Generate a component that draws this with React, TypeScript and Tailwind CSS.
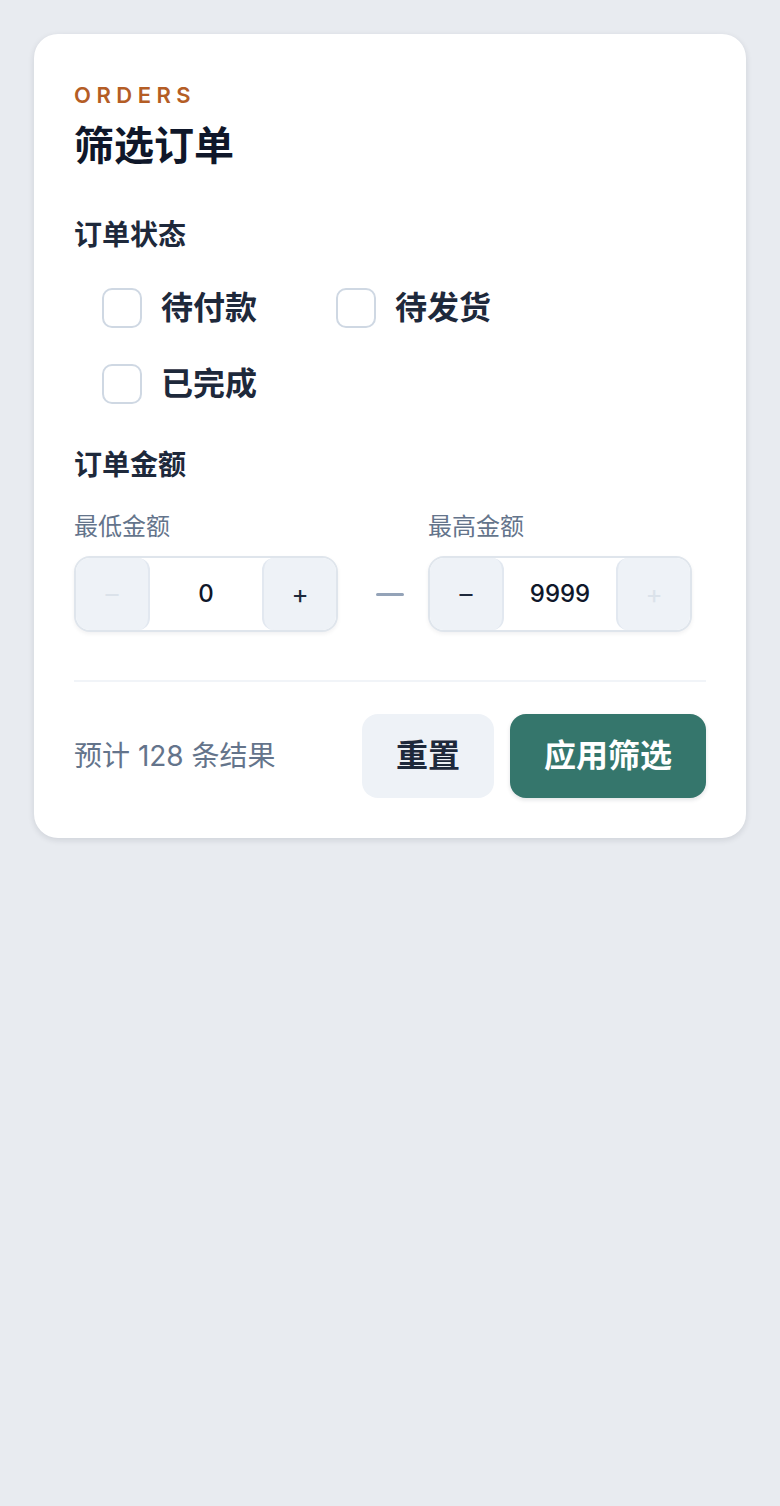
import React from 'react';

const FONT = { fontFamily: 'Inter, "Noto Sans CJK SC", "Noto Sans", sans-serif' };

interface StepperProps {
  value: string;
  minDisabled?: boolean;
  maxDisabled?: boolean;
}

function Stepper({ value, minDisabled = false, maxDisabled = false }: StepperProps) {
  return (
    <div className="flex h-[76px] w-[264px] overflow-hidden rounded-[16px] border-2 border-[#dfe5ec] bg-white shadow-[0_2px_4px_rgba(15,23,42,0.06)]">
      <button
        className={`flex w-[74px] items-center justify-center rounded-[12px] border-r-2 border-[#e2e8f0] bg-[#eef2f7] text-[26px] leading-none ${
          minDisabled ? 'text-[#dbe2ea]' : 'text-[#1e293b]'
        }`}
      >
        –
      </button>
      <div className="flex flex-1 items-center justify-center text-[24px] font-medium text-[#0f172a]">
        {value}
      </div>
      <button
        className={`flex w-[74px] items-center justify-center rounded-[12px] border-l-2 border-[#e2e8f0] bg-[#eef2f7] text-[26px] leading-none ${
          maxDisabled ? 'text-[#dbe2ea]' : 'text-[#1e293b]'
        }`}
      >
        +
      </button>
    </div>
  );
}

function Check({ label }: { label: string }) {
  return (
    <label className="flex items-center gap-[19px]">
      <span className="h-[40px] w-[40px] shrink-0 rounded-[10px] border-2 border-[#cfd8e3] bg-white" />
      <span className="text-[32px] font-bold leading-[40px] text-[#1e293b]">{label}</span>
    </label>
  );
}

export default function App() {
  return (
    <div className="min-h-[1506px] bg-[#e8ebf0] px-[34px] pt-[34px]" style={FONT}>
      <div className="rounded-[24px] bg-white px-[40px] pb-[40px] pt-[47px] shadow-[0_2px_6px_rgba(15,23,42,0.12)]">
        {/* Header */}
        <div className="text-[22px] font-semibold uppercase leading-[28px] tracking-[0.25em] text-[#b45d25]">
          Orders
        </div>
        <h1 className="mt-[13px] text-[40px] font-bold leading-[48px] text-[#0f172a]">筛选订单</h1>

        {/* Status */}
        <h2 className="mt-[47px] text-[28px] font-semibold leading-[36px] text-[#1e293b]">订单状态</h2>
        <div className="mt-[35px] grid grid-cols-[234px_234px] gap-y-[36px] pl-[28px]">
          <Check label="待付款" />
          <Check label="待发货" />
          <Check label="已完成" />
        </div>

        {/* Amount */}
        <h2 className="mt-[43px] text-[28px] font-semibold leading-[36px] text-[#1e293b]">订单金额</h2>
        <div className="mt-[28px] flex items-end">
          <div className="flex flex-col gap-[13px]">
            <span className="text-[24px] leading-[32px] text-[#64748b]">最低金额</span>
            <Stepper value="0" minDisabled />
          </div>
          <div className="ml-[38px] mr-[24px] flex h-[76px] items-center">
            <span className="h-[3px] w-[28px] rounded-full bg-[#94a3b8]" />
          </div>
          <div className="flex flex-col gap-[13px]">
            <span className="text-[24px] leading-[32px] text-[#64748b]">最高金额</span>
            <Stepper value="9999" maxDisabled />
          </div>
        </div>

        <div className="mt-[48px] h-[2px] bg-[#f1f4f8]" />

        {/* Footer */}
        <div className="mt-[32px] flex items-center justify-between">
          <span className="text-[28px] leading-[36px] text-[#64748b]">预计 128 条结果</span>
          <div className="flex gap-[16px]">
            <button className="h-[84px] w-[132px] rounded-[16px] bg-[#eef2f7] text-[32px] font-bold text-[#1e293b]">
              重置
            </button>
            <button className="h-[84px] w-[196px] rounded-[16px] bg-[#35766c] text-[32px] font-bold text-white shadow-[0_2px_4px_rgba(15,23,42,0.12)]">
              应用筛选
            </button>
          </div>
        </div>
      </div>
    </div>
  );
}
